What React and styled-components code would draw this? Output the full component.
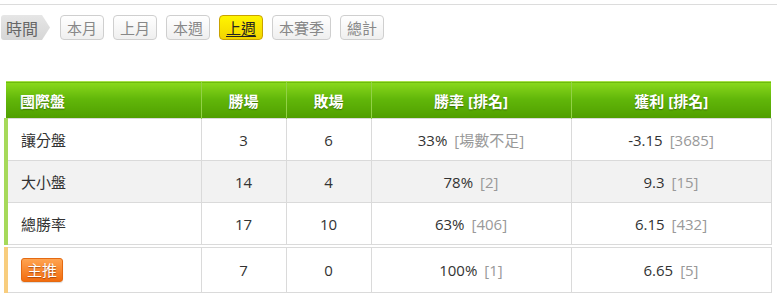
import React from 'react';
import styled, { createGlobalStyle } from 'styled-components';

const GlobalStyle = createGlobalStyle`
  body {
    margin: 0;
    background: #fff;
    font-family: "Open Sans", "Noto Sans CJK TC", sans-serif;
    color: #333;
  }
`;

const Page = styled.div`
  width: 777px;
  padding-top: 4px;
`;

const TopLine = styled.div`
  border-top: 1px solid #dcdcdc;
`;

const FilterBar = styled.div`
  display: flex;
  align-items: center;
  margin-top: 10px;
  padding-left: 1px;
  height: 25px;
`;

const FilterLabel = styled.div`
  display: flex;
  align-items: center;
  height: 25px;
  width: 49px;
  padding-left: 5px;
  box-sizing: border-box;
  background: linear-gradient(#e6e6e6, #d6d6d6);
  clip-path: polygon(0 0, 41px 0, 49px 50%, 41px 100%, 0 100%);
  border-radius: 3px 0 0 3px;
  color: #666;
  font-size: 16px;
  margin-right: 10px;
`;

const FilterButton = styled.div`
  display: flex;
  align-items: center;
  height: 25px;
  box-sizing: border-box;
  padding: 0 6px;
  margin-right: 9px;
  border-radius: 4px;
  font-size: 15px;
  border: 1px solid ${p => (p.active ? '#c9a200' : '#cfcfcf')};
  background: ${p =>
    p.active
      ? 'linear-gradient(#fff500, #f2d400)'
      : 'linear-gradient(#ffffff, #efefef)'};
  color: ${p => (p.active ? '#222' : '#888')};
  text-decoration: ${p => (p.active ? 'underline' : 'none')};
  text-underline-offset: 2px;
`;

const Table = styled.table`
  margin-left: 4px;
  margin-top: ${p => p.gap}px;
  width: 765px;
  border-collapse: collapse;
  table-layout: fixed;
  font-size: 15px;
`;

const HeadCell = styled.th`
  height: 36px;
  padding: 0;
  background: linear-gradient(#8ad91c, #62b70a 45%, #4f9e00);
  border-top: 1px solid #a8e04a;
  border-left: 1px solid #92d146;
  color: #fff;
  font-weight: bold;
  font-size: 15px;
  text-shadow: 0 1px 1px rgba(0, 0, 0, 0.35);
  text-align: ${p => (p.left ? 'left' : 'center')};
  padding-left: ${p => (p.left ? '14px' : '0')};
  &:first-child {
    border-left: none;
  }
`;

const Row = styled.tr`
  background: ${p => (p.shade ? '#f2f2f2' : '#fff')};
`;

const Cell = styled.td`
  height: 41px;
  padding: 0;
  border: 1px solid #dadada;
  text-align: center;
  color: #333;
  &:first-child {
    text-align: left;
    padding-left: 13px;
    border-left: 4px solid ${p => p.bar || '#a6d95a'};
  }
`;

const Rank = styled.span`
  color: #999;
  margin-left: 7px;
`;

const Badge = styled.span`
  display: inline-block;
  padding: 3px 5px;
  border-radius: 3px;
  background: linear-gradient(#ffa451, #f26c0e);
  border: 1px solid #e46a12;
  color: #fff;
  font-size: 15px;
  line-height: 16px;
  text-shadow: 0 1px 1px rgba(120, 40, 0, 0.6);
  box-shadow: 0 1px 1px rgba(0, 0, 0, 0.15);
`;

const filters = ['本月', '上月', '本週', '上週', '本賽季', '總計'];

const rows = [
  { name: '讓分盤', win: 3, lose: 6, rate: '33%', rateRank: '[場數不足]', profit: '-3.15', profitRank: '[3685]' },
  { name: '大小盤', win: 14, lose: 4, rate: '78%', rateRank: '[2]', profit: '9.3', profitRank: '[15]', shade: true },
  { name: '總勝率', win: 17, lose: 10, rate: '63%', rateRank: '[406]', profit: '6.15', profitRank: '[432]' },
];

const Cols = () => (
  <colgroup>
    <col style={{ width: 195 }} />
    <col style={{ width: 85 }} />
    <col style={{ width: 85 }} />
    <col style={{ width: 200 }} />
    <col style={{ width: 200 }} />
  </colgroup>
);

export default function App() {
  return (
    <Page>
      <GlobalStyle />
      <TopLine />
      <FilterBar>
        <FilterLabel>時間</FilterLabel>
        {filters.map(f => (
          <FilterButton key={f} active={f === '上週'}>
            {f}
          </FilterButton>
        ))}
      </FilterBar>

      <Table gap={41}>
        <Cols />
        <thead>
          <tr>
            <HeadCell left>國際盤</HeadCell>
            <HeadCell>勝場</HeadCell>
            <HeadCell>敗場</HeadCell>
            <HeadCell>勝率 [排名]</HeadCell>
            <HeadCell>獲利 [排名]</HeadCell>
          </tr>
        </thead>
        <tbody>
          {rows.map(r => (
            <Row key={r.name} shade={r.shade}>
              <Cell>{r.name}</Cell>
              <Cell>{r.win}</Cell>
              <Cell>{r.lose}</Cell>
              <Cell>
                {r.rate}
                <Rank>{r.rateRank}</Rank>
              </Cell>
              <Cell>
                {r.profit}
                <Rank>{r.profitRank}</Rank>
              </Cell>
            </Row>
          ))}
        </tbody>
      </Table>

      <Table gap={2}>
        <Cols />
        <tbody>
          <Row>
            <Cell bar="#f8cd7e" style={{ height: 44 }}>
              <Badge>主推</Badge>
            </Cell>
            <Cell>7</Cell>
            <Cell>0</Cell>
            <Cell>
              100%
              <Rank>[1]</Rank>
            </Cell>
            <Cell>
              6.65
              <Rank>[5]</Rank>
            </Cell>
          </Row>
        </tbody>
      </Table>
    </Page>
  );
}
